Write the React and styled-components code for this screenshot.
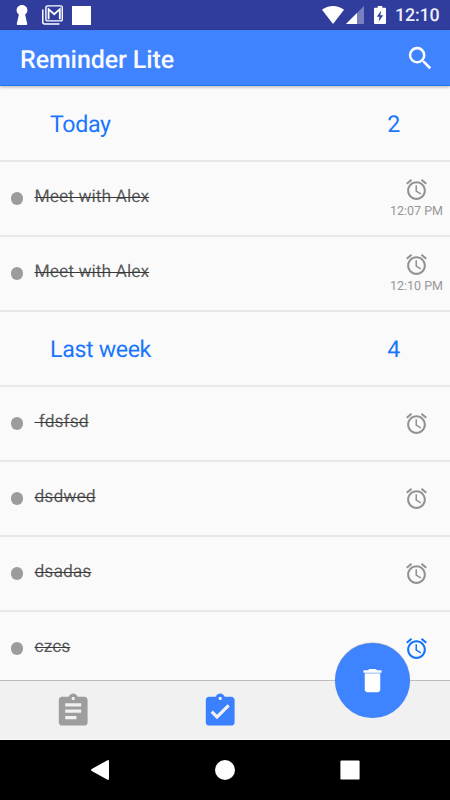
import React from "react";
import styled, { createGlobalStyle } from "styled-components";

const GlobalStyle = createGlobalStyle`
  * { box-sizing: border-box; }
  body { margin: 0; font-family: Roboto, sans-serif; background: #fafafa; text-rendering: geometricPrecision; }
`;

const Screen = styled.div`
  width: 450px;
  height: 800px;
  display: flex;
  flex-direction: column;
  overflow: hidden;
  background: #fafafa;
`;

const StatusBar = styled.header`
  flex: none;
  height: 30px;
  background: #303d9c;
  color: #fff;
  display: flex;
  justify-content: space-between;
  padding: 0 10px 0 16px;
`;

const StatusGroup = styled.div`
  display: flex;
  align-items: center;
  gap: ${(p) => p.$gap}px;
`;

const Clock = styled.time`
  font-size: 17.8px;
  line-height: 30px;
  font-weight: 500;
  letter-spacing: -0.1px;
  color: #eceefa;
  width: 45px;
  padding-top: 2px;
`;

const AppBar = styled.div`
  position: relative;
  z-index: 1;
  flex: none;
  height: 56px;
  background: #4083ff;
  border-bottom: 1px solid #2374f2;
  box-shadow: 0 1px 3px rgba(0, 0, 0, 0.3);
  display: flex;
  align-items: center;
  justify-content: space-between;
  padding: 2px 14px 0 20px;
`;

const Title = styled.h1`
  margin: 0;
  padding-top: 4px;
  font-size: 25px;
  font-weight: 500;
  line-height: 30px;
  letter-spacing: -0.1px;
  color: #f8faff;
`;

const List = styled.main`
  flex: 1;
  min-height: 0;
  padding-top: 1px;
  overflow: hidden;
`;

const Row = styled.div`
  height: 75px;
  border-bottom: 2px solid #e8e8e8;
  display: flex;
  align-items: center;
`;

const SectionRow = styled(Row)`
  justify-content: space-between;
  padding: 0 50px;
  font-size: 23.2px;
  letter-spacing: -0.35px;
  color: #1976fc;
`;

const ItemRow = styled(Row)`
  padding-left: 10.5px;
`;

const Dot = styled.span`
  flex: none;
  width: 12.5px;
  height: 12.5px;
  border-radius: 50%;
  background: #9c9c9c;
`;

const Label = styled.span`
  flex: 1;
  margin-left: 11.5px;
  padding-bottom: 3px;
  font-size: 17.5px;
  line-height: 24px;
  white-space: pre;
  color: #5a5a5a;
  text-decoration: line-through;
  text-decoration-color: #383838;
  text-decoration-thickness: 1px;
`;

const Reminder = styled.div`
  width: 67px;
  display: flex;
  flex-direction: column;
  align-items: center;
  padding-bottom: 1px;
  color: ${(p) => (p.$active ? "#1473fb" : "#929292")};
`;

const ReminderTime = styled.span`
  margin-top: 1px;
  font-size: 12.5px;
  line-height: 17px;
  white-space: nowrap;
  color: #979797;
`;

const TabBar = styled.nav`
  position: relative;
  flex: none;
  height: 60px;
  background: #f1f1f1;
  border-top: 1px solid #bcbcbc;
  border-bottom: 1px solid #fafafa;
  display: flex;
`;

const Tab = styled.div`
  width: 147px;
  display: flex;
  justify-content: center;
  padding-top: 10.5px;
  color: ${(p) => (p.$active ? "#3a80ff" : "#9d9d9d")};
`;

const DeleteButton = styled.button`
  position: absolute;
  right: 40px;
  top: -38px;
  width: 75px;
  height: 75px;
  padding: 0;
  border: 0;
  border-radius: 50%;
  background: #3e83ff;
  box-shadow: 0 -0.5px 1px rgba(0, 0, 0, 0.3);
  color: #fff;
  display: flex;
  align-items: center;
  justify-content: center;
`;

const SystemNav = styled.footer`
  flex: none;
  height: 60px;
  background: #000;
  display: grid;
  grid-template-columns: repeat(3, 125px);
  justify-content: center;
  align-items: center;
  justify-items: center;
`;

const Svg = styled.svg`
  display: block;
  flex: none;
  fill: currentColor;
`;

const MaterialIcon = ({ size, d }) => (
  <Svg width={size} height={size} viewBox="0 0 24 24">
    <path d={d} />
  </Svg>
);

const ALARM =
  "M22 5.72l-4.6-3.86-1.29 1.53 4.6 3.86L22 5.72zM7.88 3.39L6.6 1.86 2 5.71l1.29 1.53 4.59-3.85zM12.5 8H11v6l4.75 2.85.75-1.23-4-2.37V8zM12 4c-4.97 0-9 4.03-9 9s4.02 9 9 9c4.97 0 9-4.03 9-9s-4.03-9-9-9zm0 16c-3.87 0-7-3.13-7-7s3.13-7 7-7 7 3.13 7 7-3.13 7-7 7z";
const SEARCH =
  "M15.5 14h-.79l-.28-.27A6.471 6.471 0 0 0 16 9.5 6.5 6.5 0 1 0 9.5 16c1.61 0 3.09-.59 4.23-1.57l.27.28v.79l5 4.99L20.49 19l-4.99-5zm-6 0C7.01 14 5 11.99 5 9.5S7.01 5 9.5 5 14 7.01 14 9.5 11.99 14 9.5 14z";
const BOARD =
  "M19 3h-4.18C14.4 1.84 13.3 1 12 1c-1.3 0-2.4.84-2.82 2H5c-1.1 0-2 .9-2 2v14c0 1.1.9 2 2 2h14c1.1 0 2-.9 2-2V5c0-1.1-.9-2-2-2zm-7 0c.55 0 1 .45 1 1s-.45 1-1 1-1-.45-1-1 .45-1 1-1z";
const NOTES = BOARD + "m2 14H7v-2h7v2zm3-4H7v-2h10v2zm0-4H7V7h10v2z";
const DONE = BOARD + "m-2 14l-4-4 1.41-1.41L10 14.17l6.59-6.59L18 9l-8 8z";

const TrashIcon = () => (
  <Svg width="31" height="31" viewBox="0 0 24 24">
    <path d="M6 19c0 1.1.9 2 2 2h8c1.1 0 2-.9 2-2V7H6v12z" />
    <path d="M19 4h-3.5l-1-1h-5l-1 1H5v2h14V4z" />
    <path d="M6 6h12v1H6z" opacity=".65" />
  </Svg>
);

const KeyholeIcon = () => (
  <Svg width="12" height="20" viewBox="0 0 12 20">
    <path d="M6 0C3 0 .6 2.3.6 5.2C.6 7.2 1.6 8.6 2.900 9.6L.8 18.6Q.5 20 1.5 20h9Q11.5 20 11.2 18.6L9.1 9.6C10.4 8.6 11.4 7.2 11.4 5.2C11.4 2.3 9 0 6 0z" />
  </Svg>
);

const MailStackIcon = () => (
  <Svg width="21" height="20" viewBox="0 0 21 20">
    <path d="M.8 4.5V17q0 2 2 2h14.7" fill="none" stroke="#fff" strokeWidth="1.5" />
    <rect x="3.9" y=".9" width="16.4" height="15" rx="1.5" fill="#303d9c" stroke="#fff" strokeWidth="1.4" />
    <path d="M6.6 14.2V4.2L12.2 9.2L17.8 4.2V14.2" fill="none" stroke="#fff" strokeWidth="1.8" />
  </Svg>
);

const SquareIcon = () => (
  <Svg width="19" height="19" viewBox="0 0 19 19">
    <rect width="19" height="19" />
  </Svg>
);

const WifiIcon = () => (
  <Svg width="22" height="18" viewBox="0 0 22 18">
    <path d="M0 3.8Q4.8 0 11 0T22 3.8L11 18z" />
  </Svg>
);

const SignalIcon = () => (
  <Svg width="18" height="18" viewBox="0 0 18 18">
    <path d="M18 0V18H0z" opacity=".35" />
    <path d="M11 7V18H0z" />
  </Svg>
);

const BatteryIcon = () => (
  <Svg width="12" height="18" viewBox="0 0 12 18">
    <path
      fillRule="evenodd"
      d="M3.7 0h4.6v1.8H11q1 0 1 1V17q0 1-1 1H1q-1 0-1-1V2.8q0-1 1-1h2.7zM7.2 4.5L2.8 10.8h2.7L4.6 15.8L9.2 9.2H6.3z"
    />
  </Svg>
);

const BackIcon = () => (
  <Svg width="20" height="20" viewBox="0 0 20 20">
    <path d="M17.5.2Q19-.4 19 1.2V18.8Q19 20.4 17.5 19.8L1.7 11Q.3 10 1.7 9z" />
  </Svg>
);

const HomeIcon = () => (
  <Svg width="20" height="20" viewBox="0 0 20 20">
    <circle cx="10" cy="10" r="10" />
  </Svg>
);

const RecentsIcon = () => (
  <Svg width="20" height="20" viewBox="0 0 20 20">
    <rect x=".4" y=".4" width="19.2" height="19.2" rx="1.2" />
  </Svg>
);

const SystemButton = styled.div`
  color: #fff;
`;

const SearchButton = styled.div`
  color: #fff;
`;

const sections = [
  {
    title: "Today",
    items: [
      { text: "Meet with Alex", time: "12:07 PM" },
      { text: "Meet with Alex", time: "12:10 PM" },
    ],
    count: 2,
  },
  {
    title: "Last week",
    items: [
      { text: " fdsfsd" },
      { text: "dsdwed" },
      { text: "dsadas" },
      { text: "czcs", active: true },
    ],
    count: 4,
  },
];

const Item = ({ text, time, active }) => (
  <ItemRow>
    <Dot />
    <Label>{text}</Label>
    <Reminder $active={active}>
      <MaterialIcon size={25} d={ALARM} />
      {time && <ReminderTime>{time}</ReminderTime>}
    </Reminder>
  </ItemRow>
);

export default function App() {
  return (
    <>
      <GlobalStyle />
      <Screen>
        <StatusBar>
          <StatusGroup $gap={14}>
            <KeyholeIcon />
            <StatusGroup $gap={9}>
              <MailStackIcon />
              <SquareIcon />
            </StatusGroup>
          </StatusGroup>
          <StatusGroup $gap={10}>
            <StatusGroup $gap={2}>
              <WifiIcon />
              <SignalIcon />
            </StatusGroup>
            <StatusGroup $gap={9}>
              <BatteryIcon />
              <Clock>12:10</Clock>
            </StatusGroup>
          </StatusGroup>
        </StatusBar>
        <AppBar>
          <Title>Reminder Lite</Title>
          <SearchButton>
            <MaterialIcon size={30.7} d={SEARCH} />
          </SearchButton>
        </AppBar>
        <List>
          {sections.map((section) => (
            <React.Fragment key={section.title}>
              <SectionRow>
                <span>{section.title}</span>
                <span>{section.count}</span>
              </SectionRow>
              {section.items.map((item, i) => (
                <Item key={i} {...item} />
              ))}
            </React.Fragment>
          ))}
        </List>
        <TabBar>
          <Tab>
            <MaterialIcon size={38.4} d={NOTES} />
          </Tab>
          <Tab $active>
            <MaterialIcon size={38.4} d={DONE} />
          </Tab>
          <DeleteButton aria-label="Delete">
            <TrashIcon />
          </DeleteButton>
        </TabBar>
        <SystemNav>
          <SystemButton><BackIcon /></SystemButton>
          <SystemButton><HomeIcon /></SystemButton>
          <SystemButton><RecentsIcon /></SystemButton>
        </SystemNav>
      </Screen>
    </>
  );
}
